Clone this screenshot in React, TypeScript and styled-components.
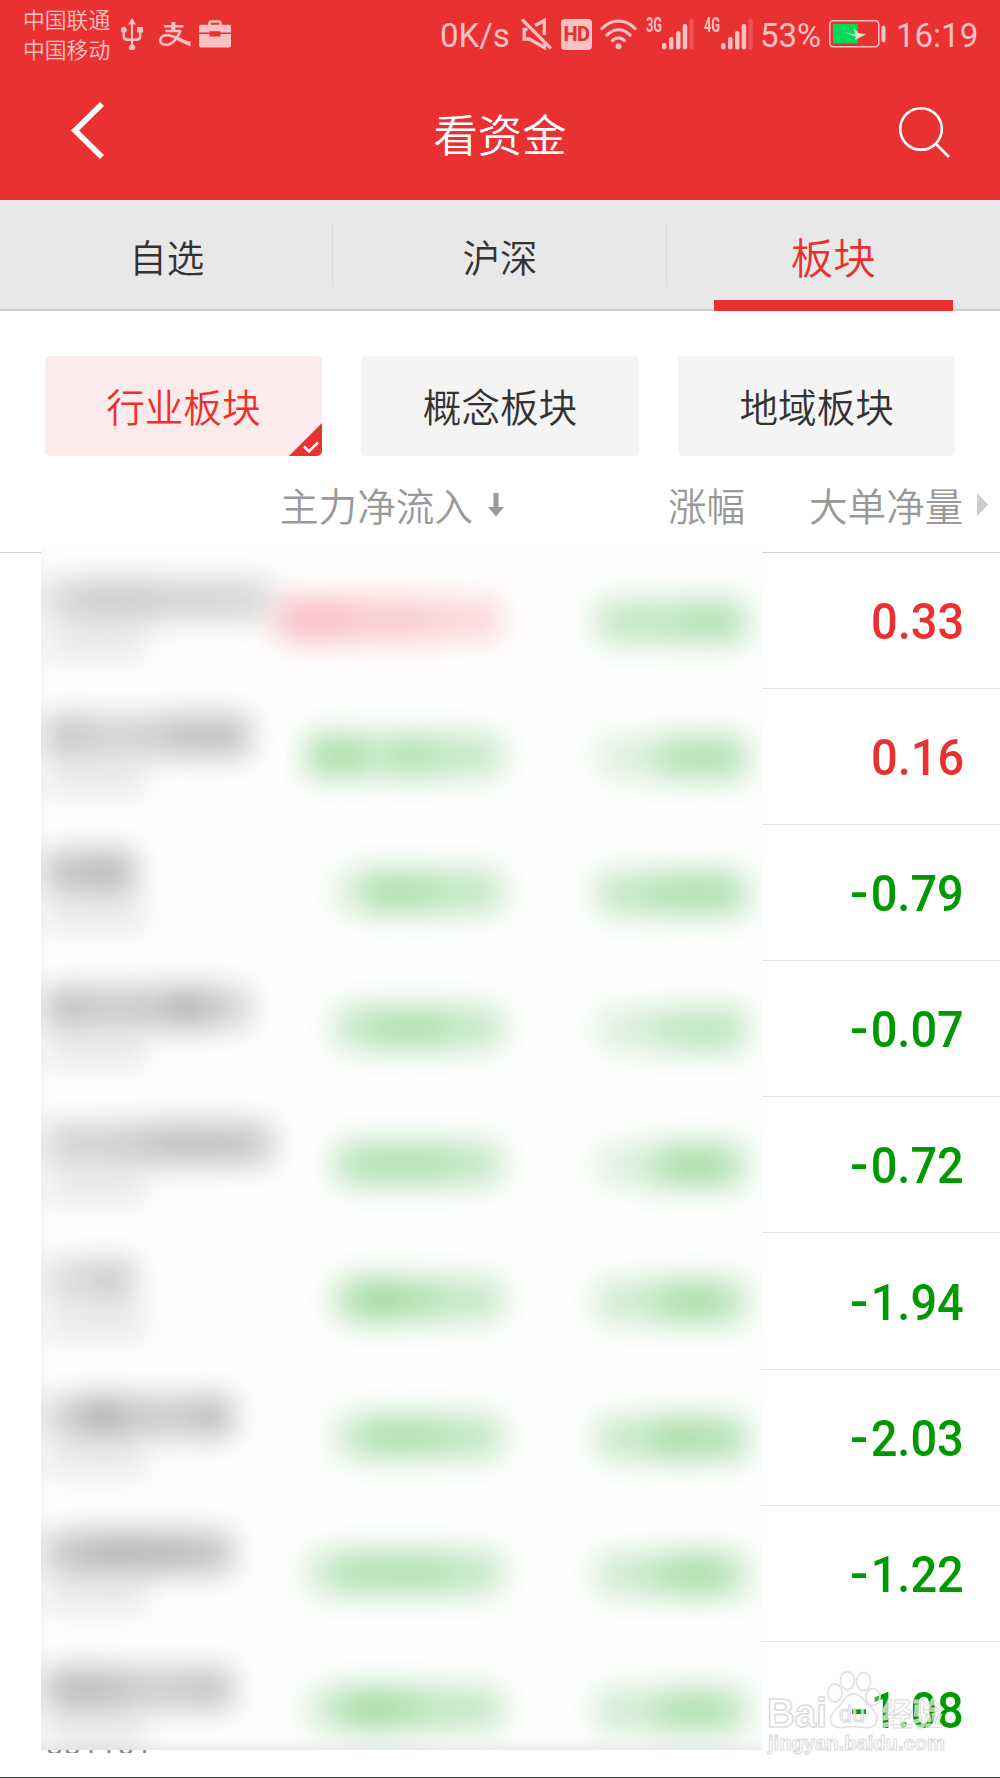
import React from 'react';
import styled, { createGlobalStyle } from 'styled-components';

const RED = '#e93131';
const GREEN = '#009900';
const SOFT = '#f9c1c1';

const GlobalStyle = createGlobalStyle`
  * { box-sizing: border-box; }
  body {
    margin: 0;
    background: #fff;
    font-family: Roboto, 'Noto Sans CJK SC', sans-serif;
    font-weight: 350;
  }
`;

const Page = styled.div`
  width: 1000px;
  height: 1778px;
  display: flex;
  flex-direction: column;
  background: #fff;
  overflow: hidden;
  position: relative;
  border-bottom: 1px solid #444;
`;

const StatusBar = styled.div`
  height: 68px;
  flex: none;
  display: flex;
  align-items: center;
  justify-content: space-between;
  padding: 0 23px;
  background: ${RED};
  color: ${SOFT};
`;

const StatusGroup = styled.div`
  display: flex;
  align-items: center;
`;

const Carriers = styled.div`
  width: 90px;
  font-family: 'Noto Sans CJK SC', sans-serif;
  font-size: 21.8px;
  line-height: 30px;
  white-space: nowrap;
`;

const StatusText = styled.span<{ $width: number; $left?: number }>`
  display: block;
  flex: none;
  width: ${(p) => p.$width}px;
  margin-left: ${(p) => p.$left ?? 0}px;
  padding-top: 3px;
  font-size: 33px;
  line-height: 40px;
  font-weight: 400;
  white-space: nowrap;
`;

const Glyph = styled.svg<{ $left?: number }>`
  flex: none;
  display: block;
  margin-left: ${(p) => p.$left ?? 0}px;
`;

const HdBadge = styled.span`
  flex: none;
  width: 31px;
  height: 31px;
  margin-left: 9px;
  margin-right: 1px;
  border-radius: 4px;
  background: ${SOFT};
  color: ${RED};
  font-size: 20px;
  line-height: 31px;
  font-weight: 800;
  text-align: center;
  letter-spacing: -0.5px;
`;

const Network = styled.div<{ $left: number }>`
  flex: none;
  display: flex;
  align-items: flex-start;
  height: 31px;
  margin-left: ${(p) => p.$left}px;
`;

const NetworkLabel = styled.span`
  width: 16px;
  font-size: 20px;
  line-height: 13px;
  font-weight: 700;
  transform: scaleX(0.64);
  transform-origin: left;
`;

const TitleBar = styled.header`
  height: 132px;
  flex: none;
  display: grid;
  grid-template-columns: 120px 1fr 120px;
  background: ${RED};
`;

const BackIcon = styled(Glyph)`
  margin-top: 30px;
`;

const SearchIcon = styled(Glyph)`
  margin-top: 36px;
`;

const Title = styled.h1`
  margin: 0;
  padding-top: 37px;
  text-align: center;
  color: #fff;
  font-size: 44.3px;
  line-height: 64px;
  font-weight: 350;
`;

const Tabs = styled.nav`
  height: 111px;
  flex: none;
  display: grid;
  grid-template-columns: repeat(3, 1fr);
  background: #e8e8e8;
  border-bottom: 2px solid #cdcdcd;
`;

const Tab = styled.div<{ $active?: boolean }>`
  position: relative;
  height: 109px;
  padding-top: 2px;
  display: flex;
  align-items: center;
  justify-content: center;
  color: ${(p) => (p.$active ? RED : '#333')};
  font-size: ${(p) => (p.$active ? 42.5 : 37.5)}px;

  &:not(:first-child)::before {
    content: '';
    position: absolute;
    left: -1px;
    top: 25px;
    width: 1px;
    height: 61px;
    background: #dadada;
  }

  &::after {
    content: '';
    display: ${(p) => (p.$active ? 'block' : 'none')};
    position: absolute;
    left: 47px;
    bottom: -2px;
    width: 239px;
    height: 11px;
    background: ${RED};
  }
`;

const Chips = styled.div`
  flex: none;
  display: grid;
  grid-template-columns: repeat(3, 1fr);
  gap: 39px;
  padding: 45px 44.5px 0;
`;

const Chip = styled.div<{ $active?: boolean }>`
  position: relative;
  height: 100px;
  padding-bottom: 3px;
  display: flex;
  align-items: center;
  justify-content: center;
  border-radius: 5px;
  overflow: hidden;
  background: ${(p) => (p.$active ? '#fdeaea' : '#f4f4f4')};
  color: ${(p) => (p.$active ? RED : '#333')};
  font-size: 38.6px;
`;

const ChipMark = styled.svg`
  position: absolute;
  right: 0;
  bottom: 0;
`;

const ColumnHeads = styled.div`
  height: 97px;
  flex: none;
  display: grid;
  grid-template-columns: 280px 388px 141px 1fr;
  align-items: center;
  padding-bottom: 1px;
  border-bottom: 1px solid #d0d0d0;
  color: #999;
  font-size: 38.6px;
  white-space: nowrap;
`;

const Head = styled.div`
  display: flex;
  align-items: center;
`;

const Body = styled.div`
  flex: 1;
  display: grid;
  grid-template-columns: 41px 721px 238px;
`;

const Veil = styled.div`
  height: 1205px;
  margin-top: -8px;
  padding-top: 8px;
  position: relative;
  overflow: hidden;
  background: #fefefe;
  box-shadow: inset 0 -16px 12px -12px rgba(0, 0, 0, 0.09), inset 12px 0 14px -12px rgba(0, 0, 0, 0.05);
`;

const VeilRow = styled.div`
  height: 136.1px;
  display: grid;
  grid-template-columns: 240px 221px 1fr;
`;

const NameCell = styled.div`
  padding: 26px 0 0 4px;
`;

const FlowCell = styled.div`
  padding-top: 45px;
  display: flex;
  justify-content: flex-end;
`;

const RateCell = styled.div`
  padding: 47px 0 0 94px;
`;

const Smudge = styled.div<{ $height: number; $color: string }>`
  display: flex;
  width: max-content;
  height: ${(p) => p.$height}px;
  color: ${(p) => p.$color};
  filter: blur(15px);

  & + & { margin-top: 8px; }
`;

const Patch = styled.span<{ $width: number; $alpha: number }>`
  width: ${(p) => p.$width}px;
  background: currentColor;
  opacity: ${(p) => (p.$alpha * 0.93) / 100};
`;

const Values = styled.div`
  grid-column: 3;
`;

const Value = styled.div<{ $up: boolean }>`
  height: 136.1px;
  padding: 2px 36px 0 0;
  display: flex;
  align-items: center;
  justify-content: flex-end;
  border-bottom: 1px solid #e4e4e4;
  color: ${(p) => (p.$up ? RED : GREEN)};
  font-size: 50.5px;
  font-weight: 500;

  &:last-child { border-bottom: 0; }
`;

const Digits = styled.span`
  transform: scaleX(0.93);
  transform-origin: right;
`;

const Minus = styled.span`
  display: inline-block;
  transform: translateY(-1px) scaleX(1.15);
  transform-origin: right;
  margin-right: 2.5px;
`;

const CutCode = styled.div`
  height: 3px;
  padding-left: 5px;
  overflow: hidden;
  display: flex;
  align-items: flex-end;
  color: #888;
  font-size: 30px;
  font-weight: 400;
  letter-spacing: 1px;
  line-height: 17px;
`;

const VeilColumn = styled.div`
  grid-column: 2;
  height: 1225px;
`;

const Watermark = styled.svg`
  position: absolute;
  left: 760px;
  top: 1662px;
`;

type RowData = { name: number[]; size: number; flow: number[]; rate: number[]; value: string };

const rows: RowData[] = [
  { name: [17, 22, 21, 18, 18, 17], size: 37.5, flow: [31, 31, 29, 24, 26, 21, 19, 18], rate: [24, 26, 27, 32, 30], value: '0.33' },
  { name: [24, 19, 20, 26, 26], size: 41, flow: [33, 37, 23, 33, 29, 24, 23], rate: [13, 15, 29, 33, 31], value: '0.16' },
  { name: [26, 29], size: 45, flow: [14, 32, 36, 29, 26, 25], rate: [23, 27, 33, 34, 31], value: '-0.79' },
  { name: [26, 22, 23, 31, 20], size: 41, flow: [22, 30, 35, 33, 25, 24], rate: [14, 17, 25, 28, 27], value: '-0.07' },
  { name: [19, 19, 22, 27, 26, 23], size: 38, flow: [27, 32, 33, 32, 27, 24], rate: [13, 17, 33, 39, 28], value: '-0.72' },
  { name: [15, 21], size: 45, flow: [27, 42, 35, 30, 24, 24], rate: [20, 21, 32, 37, 27], value: '-1.94' },
  { name: [20, 33, 23, 22, 28], size: 37.5, flow: [19, 33, 35, 31, 27, 25], rate: [22, 25, 37, 34, 31], value: '-2.03' },
  { name: [24, 30, 30, 29, 25], size: 37.5, flow: [18, 31, 31, 33, 32, 26, 24], rate: [20, 22, 32, 37, 27], value: '-1.22' },
  { name: [28, 28, 22, 22, 25], size: 37.5, flow: [16, 32, 40, 33, 27, 25, 24], rate: [20, 19, 31, 34, 27], value: '-1.08' },
];

function Blurred({ row, index }: { row: RowData; index: number }) {
  return (
    <VeilRow>
      <NameCell>
        <Smudge $height={41} $color="#000">
          {row.name.map((a, i) => (
            <Patch key={i} $width={row.size} $alpha={a} />
          ))}
        </Smudge>
        <Smudge $height={32} $color="#000">
          <Patch $width={102} $alpha={9} />
        </Smudge>
      </NameCell>
      <FlowCell>
        <Smudge $height={43} $color={index === 0 ? '#f02030' : '#009f00'}>
          {row.flow.map((a, i) => (
            <Patch key={i} $width={28} $alpha={a} />
          ))}
        </Smudge>
      </FlowCell>
      <RateCell>
        <Smudge $height={43} $color="#009f00">
          {row.rate.map((a, i) => (
            <Patch key={i} $width={30} $alpha={a} />
          ))}
        </Smudge>
      </RateCell>
    </VeilRow>
  );
}

function SignalBars({ left }: { left: number }) {
  return (
    <Glyph width="32" height="31" viewBox="0 0 32 31" $left={left} fill={SOFT}>
      <rect x="0" y="24" width="4.5" height="6.5" rx="2" />
      <rect x="7" y="18" width="4.5" height="12.5" rx="2" />
      <rect x="14" y="12" width="4.5" height="18.5" rx="2" />
      <rect x="20.7" y="5" width="4.5" height="25.5" rx="2" />
      <rect x="27.5" y="0" width="4.3" height="30.5" rx="2" opacity="0.25" />
    </Glyph>
  );
}

export default function App() {
  return (
    <Page>
      <GlobalStyle />
      <StatusBar>
        <StatusGroup>
          <Carriers>
            <div>中国联通</div>
            <div>中国移动</div>
          </Carriers>
          <Glyph width="22" height="32" viewBox="0 0 22 32" $left={8} fill={SOFT}>
            <path d="M11 0l4 6.5H12v14h3.2c2 0 2.8-1 2.8-3v-3h-2V9h6v5.500h-1.500v3.500c0 3.200-1.700 5-4.700 5H12v3.500a3.200 3.200 0 1 1-2 0V23H6.200c-3 0-4.700-1.800-4.700-5v-3.300a3.100 3.100 0 1 1 2.500 0v2.800c0 2 .8 3 2.800 3H10v-14H7z" />
          </Glyph>
          <Glyph width="32" height="25" viewBox="0 0 32 25" $left={16} fill="none" stroke={SOFT}>
            <path d="M5 4.200h19.500M6.500 9H22" strokeWidth="2.400" />
            <path d="M14.300 0v9" strokeWidth="4" />
            <path d="M21.500 8.500C19.500 14.500 14 22.500 7.500 22.800 3.500 23 1 20.800 1.200 18c.3-3.200 4-5.300 8.300-4.700C15.500 14.200 22 17.500 31 21.500" strokeWidth="2.600" />
            <path d="M16 15.500C22 18 26 19 31.500 19.500v5C27 22.500 22.500 20.500 17.500 18z" fill={SOFT} stroke="none" />
          </Glyph>
          <Glyph width="32" height="28" viewBox="0 0 32 28" $left={8}>
            <path d="M10.500 6V3.200c0-1 .8-1.700 1.700-1.700h7.600c1 0 1.700.8 1.700 1.700V6" fill="none" stroke={SOFT} strokeWidth="2.400" />
            <path d="M2 4.800h28a2 2 0 0 1 2 2v5.700H21.500v-1.300h-11v1.300H0V6.800a2 2 0 0 1 2-2zM0 14h10.500v2.500h11V14H32v11.500a2 2 0 0 1-2 2H2a2 2 0 0 1-2-2z" fill={SOFT} />
          </Glyph>
        </StatusGroup>
        <StatusGroup>
          <StatusText $width={81}>0K/s</StatusText>
          <Glyph width="31" height="32" viewBox="0 0 31 32" fill="none" stroke={SOFT} strokeWidth="3.300">
            <path d="M1 1.500L30 30.500M14 7.500L23.300 2.500V17M6.500 11.500H3.200v9.500h5L23.300 29.500V25" />
          </Glyph>
          <HdBadge>HD</HdBadge>
          <Glyph width="37" height="31" viewBox="0 0 37 31" $left={7} fill="none" stroke={SOFT} strokeWidth="3.200" strokeLinecap="round">
            <path d="M2 9.500C11.500-.5 25.500-.5 35 9.500M7 16c7-7 16-7 23 0M12.500 21.500c3.700-3.400 8.300-3.400 12 0" />
            <circle cx="18.500" cy="27.300" r="3" fill={SOFT} stroke="none" />
          </Glyph>
          <Network $left={9}>
            <NetworkLabel>3G</NetworkLabel>
            <SignalBars left={0} />
          </Network>
          <Network $left={10}>
            <NetworkLabel>4G</NetworkLabel>
            <SignalBars left={1} />
          </Network>
          <StatusText $width={69} $left={7}>53%</StatusText>
          <Glyph width="57" height="28" viewBox="0 0 57 28">
            <rect x="0.800" y="0.800" width="49" height="26" rx="3.500" fill="none" stroke={SOFT} strokeWidth="1.500" />
            <rect x="4" y="4" width="25" height="19.500" fill="#00d95a" />
            <path d="M14 12l12 2.500L24.500 8l5 5 7.500 1.200-11 5.800.5-3.500z" fill="#c9f0d0" />
            <rect x="52.500" y="5.500" width="4" height="17" rx="2" fill={SOFT} />
          </Glyph>
          <StatusText $width={81} $left={10}>16:19</StatusText>
        </StatusGroup>
      </StatusBar>

      <TitleBar>
        <BackIcon width="50" height="66" viewBox="0 0 50 66" $left={62}>
          <path d="M40 6L13 32.500l27 26.500" fill="none" stroke="#fff" strokeWidth="5.600" />
        </BackIcon>
        <Title>看资金</Title>
        <SearchIcon width="56" height="56" viewBox="0 0 56 56" $left={16} fill="none" stroke="#fff" strokeWidth="2.600">
          <circle cx="25" cy="25" r="20.800" />
          <path d="M39.500 39.500L53 53" />
        </SearchIcon>
      </TitleBar>

      <Tabs>
        <Tab>自选</Tab>
        <Tab>沪深</Tab>
        <Tab $active>板块</Tab>
      </Tabs>

      <Chips>
        <Chip $active>
          行业板块
          <ChipMark width="33" height="33" viewBox="0 0 33 33">
            <path d="M33 0v33H0z" fill={RED} />
            <path d="M15 23.500l5 5 9-9" fill="none" stroke="#fff" strokeWidth="2.600" />
          </ChipMark>
        </Chip>
        <Chip>概念板块</Chip>
        <Chip>地域板块</Chip>
      </Chips>

      <ColumnHeads>
        <span />
        <Head>
          主力净流入
          <Glyph width="16" height="26" viewBox="0 -2 16 26" $left={15}>
            <path d="M5.500 0h5v14H16l-8 9.500L0 14h5.500z" fill="#999" />
          </Glyph>
        </Head>
        <Head>涨幅</Head>
        <Head>
          大单净量
          <Glyph width="11" height="25" viewBox="0 -2 11 25" $left={14}>
            <path d="M0 0l11 11.500L0 23z" fill="#ccc" />
          </Glyph>
        </Head>
      </ColumnHeads>

      <Body>
        <VeilColumn>
          <Veil>
            {rows.map((row, i) => (
              <Blurred key={row.value} row={row} index={i} />
            ))}
          </Veil>
          <CutCode>881101</CutCode>
        </VeilColumn>
        <Values>
          {rows.map(({ value }) => (
            <Value key={value} $up={!value.startsWith('-')}>
              <Digits>
                {value.startsWith('-') && <Minus>-</Minus>}
                {value.replace('-', '')}
              </Digits>
            </Value>
          ))}
        </Values>
      </Body>

      <Watermark width="200" height="100" viewBox="0 0 200 100">
        <g fill="#fff" fillOpacity="0.25" stroke="#e2e2e2" strokeWidth="1.800">
          <ellipse cx="75" cy="31" rx="7" ry="9" />
          <ellipse cx="87.500" cy="18.500" rx="7" ry="9" />
          <ellipse cx="103.500" cy="19.500" rx="7" ry="9" />
          <ellipse cx="113" cy="35" rx="7" ry="8.500" />
          <path d="M93.500 32c8 0 10 6 15 11s9 9 8.500 14c-.6 7-6 9.500-12 8.500-8-1.300-15-1.300-23 0-6 1-11.500-2-11.500-8.500 0-6 5-9 9-13s6-12 14-12z" fill="none" />
        </g>
        <g fill="#fff" fillOpacity="0.65" stroke="#d6d6d6" strokeOpacity="0.85" strokeWidth="1.700" fontFamily="'Liberation Sans', 'Noto Sans CJK SC', sans-serif">
          <text x="7" y="64.500" fontSize="41" fontWeight="700" textLength="60" lengthAdjust="spacingAndGlyphs">Bai</text>
          <text x="79" y="60" fontSize="24" fontWeight="400" strokeWidth="1.200" textLength="26" lengthAdjust="spacingAndGlyphs">du</text>
          <text x="122" y="63" fontSize="31" fontWeight="700" strokeWidth="1" textLength="61" lengthAdjust="spacingAndGlyphs">经验</text>
          <text x="8" y="88" fontSize="21" fontWeight="700" strokeWidth="1.200" textLength="177" lengthAdjust="spacingAndGlyphs">jingyan.baidu.com</text>
        </g>
      </Watermark>
    </Page>
  );
}
